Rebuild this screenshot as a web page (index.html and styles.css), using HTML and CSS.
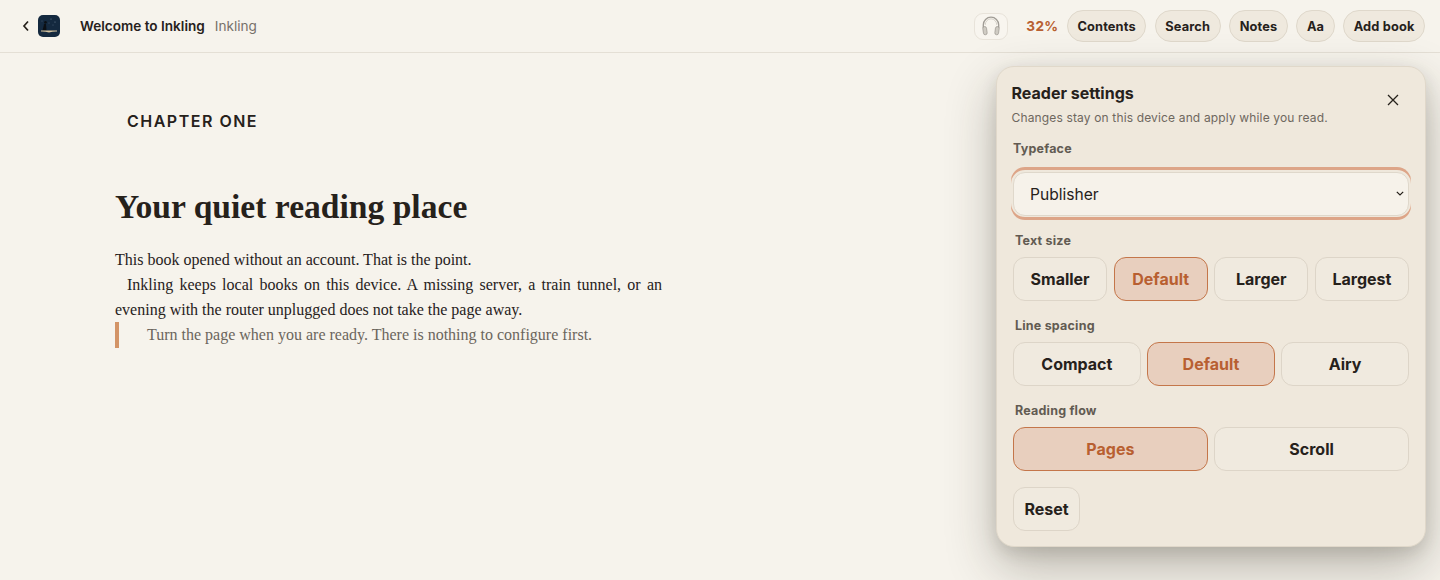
FILE: index.html
```html
<!DOCTYPE html>
<html>

<head>
    <title>Inkling</title>
    <link rel="stylesheet" href="styles.css">
</head>

<body>
    <header class="topbar">
        <div class="topbar-left">
            <button class="back" aria-label="Back">
                <svg width="8" height="12" viewBox="0 0 8 12"><path d="M6 1.500 L2 6 L6 10.500" fill="none" stroke="#26211b" stroke-width="1.700"/></svg>
            </button>
            <svg class="cover" width="22" height="22" viewBox="0 0 22 22">
                <rect width="22" height="22" rx="5" fill="#14293f"/>
                <circle cx="13" cy="4" r=".5" fill="#7f93a6"/>
                <circle cx="17" cy="7" r=".5" fill="#7f93a6"/>
                <circle cx="11" cy="8" r=".4" fill="#7f93a6"/>
                <circle cx="15" cy="10" r=".4" fill="#7f93a6"/>
                <circle cx="4" cy="6" r=".4" fill="#7f93a6"/>
                <path d="M4.500 15.500 L6 9.500 Q7 8 8 9 L8.500 15.500 Z" fill="#0b0f14"/>
                <circle cx="7.500" cy="7.200" r="1.300" fill="#0b0f14"/>
                <path d="M3 15.500 H11 H19 V16.500 Q15 16.300 11 17.500 Q7 16.300 3 16.500 Z" fill="#d6c4a0"/>
            </svg>
            <span class="book-title">Welcome to Inkling</span>
            <span class="book-author">Inkling</span>
        </div>
        <div class="topbar-right">
            <button class="audio" aria-label="Listen">
                <svg width="22" height="22" viewBox="0 0 20 20" fill="none">
                    <path d="M3 12 V9 A7 7 0 0 1 17 9 V12" stroke="#a09c95" stroke-width="1.200"/>
                    <path d="M4.800 9 A5.200 5.500 0 0 1 15.200 9" stroke="#d4d0c8" stroke-width=".9"/>
                    <rect x="2.800" y="10.500" width="3.400" height="7.500" rx="1.700" transform="rotate(-8 4.500 14)" fill="#cfcbc3" stroke="#98948d" stroke-width=".6"/>
                    <rect x="13.800" y="10.500" width="3.400" height="7.500" rx="1.700" transform="rotate(8 15.500 14)" fill="#cfcbc3" stroke="#98948d" stroke-width=".6"/>
                </svg>
            </button>
            <span class="progress">32%</span>
            <button class="pill">Contents</button>
            <button class="pill">Search</button>
            <button class="pill">Notes</button>
            <button class="pill">Aa</button>
            <button class="pill">Add book</button>
        </div>
    </header>

    <main class="page">
        <div class="chapter">CHAPTER ONE</div>
        <h1>Your quiet reading place</h1>
        <p>This book opened without an account. That is the point.</p>
        <p class="indent">Inkling keeps local books on this device. A missing server, a train tunnel, or an evening with the router unplugged does not take the page away.</p>
        <blockquote>Turn the page when you are ready. There is nothing to configure first.</blockquote>
    </main>

    <aside class="settings">
        <div class="settings-head">
            <div>
                <h2>Reader settings</h2>
                <div class="settings-sub">Changes stay on this device and apply while you read.</div>
            </div>
            <button class="close" aria-label="Close">
                <svg width="12" height="12" viewBox="0 0 12 12"><path d="M1 1 L11 11 M11 1 L1 11" stroke="#26211b" stroke-width="1.300"/></svg>
            </button>
        </div>

        <div class="label label-first">Typeface</div>
        <div class="select-ring">
            <select>
                <option>Publisher</option>
            </select>
        </div>

        <div class="label">Text size</div>
        <div class="seg seg-4">
            <button>Smaller</button>
            <button class="on">Default</button>
            <button>Larger</button>
            <button>Largest</button>
        </div>

        <div class="label">Line spacing</div>
        <div class="seg seg-3">
            <button>Compact</button>
            <button class="on">Default</button>
            <button>Airy</button>
        </div>

        <div class="label">Reading flow</div>
        <div class="seg seg-2">
            <button class="on">Pages</button>
            <button>Scroll</button>
        </div>

        <button class="reset">Reset</button>
    </aside>
</body>

</html>
```

FILE: styles.css
```css
* {
    box-sizing: border-box;
}

html,
body {
    height: 100%;
}

body {
    margin: 0;
    overflow: hidden;
    background-color: #f6f3ec;
    color: #26211b;
    font-family: Inter, "Liberation Sans", sans-serif;
}

button {
    font-family: inherit;
    color: inherit;
    cursor: pointer;
}

.topbar {
    display: flex;
    align-items: center;
    justify-content: space-between;
    height: 53px;
    padding: 0 15px 1px 19px;
    border-bottom: 1px solid #e4dfd5;
}

.topbar-left,
.topbar-right {
    display: flex;
    align-items: center;
}

.back {
    display: flex;
    padding: 0 3px;
    border: none;
    background: none;
}

.cover {
    margin-left: 5px;
}

.book-title {
    margin-left: 20px;
    font-size: 13.600px;
    font-weight: 600;
}

.book-author {
    margin-left: 10px;
    font-size: 13.600px;
    color: #77716a;
}

.topbar-right {
    gap: 8.500px;
    margin-top: 1px;
}

.audio {
    display: flex;
    align-items: center;
    justify-content: center;
    width: 34px;
    height: 27px;
    margin-right: 10px;
    padding: 0;
    border: 1px solid #e8e3da;
    border-radius: 9px;
    background-color: #f8f5ef;
}

.progress {
    font-size: 13.600px;
    font-weight: 700;
    letter-spacing: .3px;
    color: #b85f31;
}

.pill {
    height: 32px;
    padding: 0 9.500px;
    border: 1px solid #dfd8cb;
    border-radius: 16px;
    background-color: #efe9de;
    font-size: 12.800px;
    font-weight: 700;
    letter-spacing: .15px;
}

.page {
    width: 547px;
    margin-left: 115px;
    padding-top: 58px;
    font-family: "Liberation Serif", serif;
    font-size: 16px;
    line-height: 25px;
    color: #26211b;
}

.chapter {
    padding-left: 12px;
    font-family: Inter, "Liberation Sans", sans-serif;
    font-size: 16px;
    font-weight: 600;
    line-height: 20px;
    letter-spacing: 1.500px;
}

h1 {
    margin: 56px 0 20px;
    font-size: 33.600px;
    line-height: 40px;
    font-weight: 700;
}

p {
    margin: 0;
    text-align: justify;
}

.indent {
    text-indent: 12px;
}

blockquote {
    margin: 0;
    padding: 0 0 1px 28px;
    border-left: 4px solid #d39467;
    color: #6b655c;
}

.settings {
    position: absolute;
    top: 66px;
    left: 996px;
    width: 429.500px;
    height: 480.500px;
    padding: 15.500px 14.500px 0;
    border: 1px solid #e0d8ca;
    border-radius: 18px;
    background-color: #efe8dc;
    box-shadow: 0 20px 50px rgba(45, 40, 25, .3), 0 6px 16px rgba(45, 40, 25, .12);
}

.settings-head {
    display: flex;
    align-items: flex-start;
    justify-content: space-between;
}

h2 {
    margin: 0;
    font-size: 16px;
    font-weight: 700;
    line-height: 20px;
}

.settings-sub {
    margin-top: 7px;
    font-size: 12px;
    line-height: 16px;
    letter-spacing: .15px;
    color: #6e675e;
}

.close {
    display: flex;
    margin: 11px 11px 0 0;
    padding: 0;
    border: none;
    background: none;
}

.label {
    margin: 0 2px 8px 3.500px;
    font-size: 12.500px;
    font-weight: 700;
    line-height: 16px;
    letter-spacing: .2px;
    color: #625b52;
}

.label-first {
    margin: 15px 2px 10px 1.500px;
}

.select-ring {
    height: 53px;
    margin: 0 -1px 13px -.5px;
    padding: 5px 2px 0;
    border-radius: 14px;
    box-shadow: inset 0 3px 0 #dda588, inset 0 -3px 0 #dda588;
}

select {
    display: block;
    width: 100%;
    height: 44px;
    padding: 1px 16px 0;
    border: 1px solid #dfd8cb;
    border-radius: 12px;
    appearance: none;
    background: #f6f2ea url("data:image/svg+xml,%3Csvg xmlns='http://www.w3.org/2000/svg' width='8' height='5' viewBox='0 0 8 5'%3E%3Cpath d='M.8.8 4 4 7.200.8' fill='none' stroke='%2326211b' stroke-width='1.200'/%3E%3C/svg%3E") no-repeat right 4px center;
    color: #26211b;
    font-family: inherit;
    font-size: 15.600px;
}

.seg {
    display: grid;
    gap: 6.400px;
    margin: 0 1px 17px 1.500px;
}

.seg-4 {
    grid-template-columns: repeat(4, 1fr);
}

.seg-3 {
    grid-template-columns: repeat(3, 1fr);
}

.seg-2 {
    grid-template-columns: repeat(2, 1fr);
    margin-bottom: 16px;
}

.seg button,
.reset {
    height: 44px;
    border: 1px solid #ddd5c8;
    border-radius: 12px;
    background-color: #f0eadf;
    font-size: 16px;
    font-weight: 700;
}

.seg .on {
    border-color: #c4764a;
    background-color: #e8cfbe;
    color: #b85f31;
}

.reset {
    width: 67px;
    margin: 0 0 0 1.500px;
    padding: 0;
}
```
